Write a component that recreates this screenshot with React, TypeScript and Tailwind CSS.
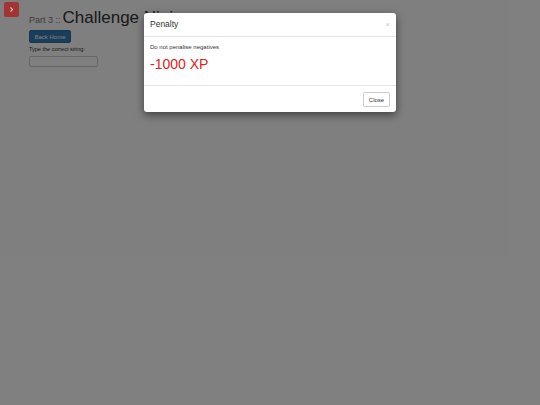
export default function App() {
  return (
    <div className="relative h-[405px] w-[540px] overflow-hidden bg-white font-['Liberation_Sans',Arial,sans-serif] text-[#333]">
      {/* Page */}
      <div className="flex">
        <div className="w-[29px] shrink-0" />
        <div className="flex flex-col pt-[7px]">
          <div className="flex items-baseline gap-[2px]">
            <span className="text-[9px] text-[#777]">Part 3 ::</span>
            <span className="text-[17px] leading-[22px] text-[#333]">Challenge Ninja</span>
          </div>
          <button className="mt-[1px] h-[13px] w-[42px] rounded-[2px] border border-[#2e6da4] bg-[#337ab7] text-[6px] leading-none text-white">
            Back Home
          </button>
          <div className="mt-[2px] text-[5.5px] leading-[8px] text-[#333]">Type the correct string:</div>
          <div className="mt-[3px] h-[11px] w-[69px] rounded-[2px] border border-[#ccc] bg-white" />
        </div>
      </div>

      {/* Backdrop */}
      <div className="absolute inset-0 bg-black/50" />

      {/* Sidebar toggle */}
      <button className="absolute left-[4px] top-[2px] flex h-[15px] w-[15px] items-center justify-center rounded-[2px] bg-[#a33434]">
        <svg viewBox="0 0 10 10" className="h-[7px] w-[7px]" fill="none" stroke="#e9c6c6" strokeWidth="1.6">
          <path d="M3.5 2 L6.5 5 L3.5 8" />
        </svg>
      </button>

      {/* Modal */}
      <div className="absolute inset-x-0 top-[13px] flex justify-center">
        <div className="w-[252px] rounded-[3px] bg-white shadow-[0_3px_9px_rgba(0,0,0,0.5)]">
          <div className="flex items-center justify-between border-b border-[#e5e5e5] px-[6px] py-[5px]">
            <span className="text-[8.5px] leading-[13px] text-[#333]">Penalty</span>
            <span className="text-[8px] leading-none text-[#c8c8c8]">×</span>
          </div>
          <div className="px-[6px] pb-[12px] pt-[6px]">
            <div className="text-[6px] leading-[9px] text-[#333]">Do not penalise negatives</div>
            <div className="mt-[3px] text-[14px] leading-[18px] text-[#dd2020]">-1000 XP</div>
          </div>
          <div className="flex justify-end border-t border-[#e5e5e5] px-[6px] pb-[5px] pt-[6px]">
            <button className="h-[15px] w-[27px] rounded-[2px] border border-[#ccc] bg-white text-[6px] leading-none text-[#333]">
              Close
            </button>
          </div>
        </div>
      </div>
    </div>
  );
}
